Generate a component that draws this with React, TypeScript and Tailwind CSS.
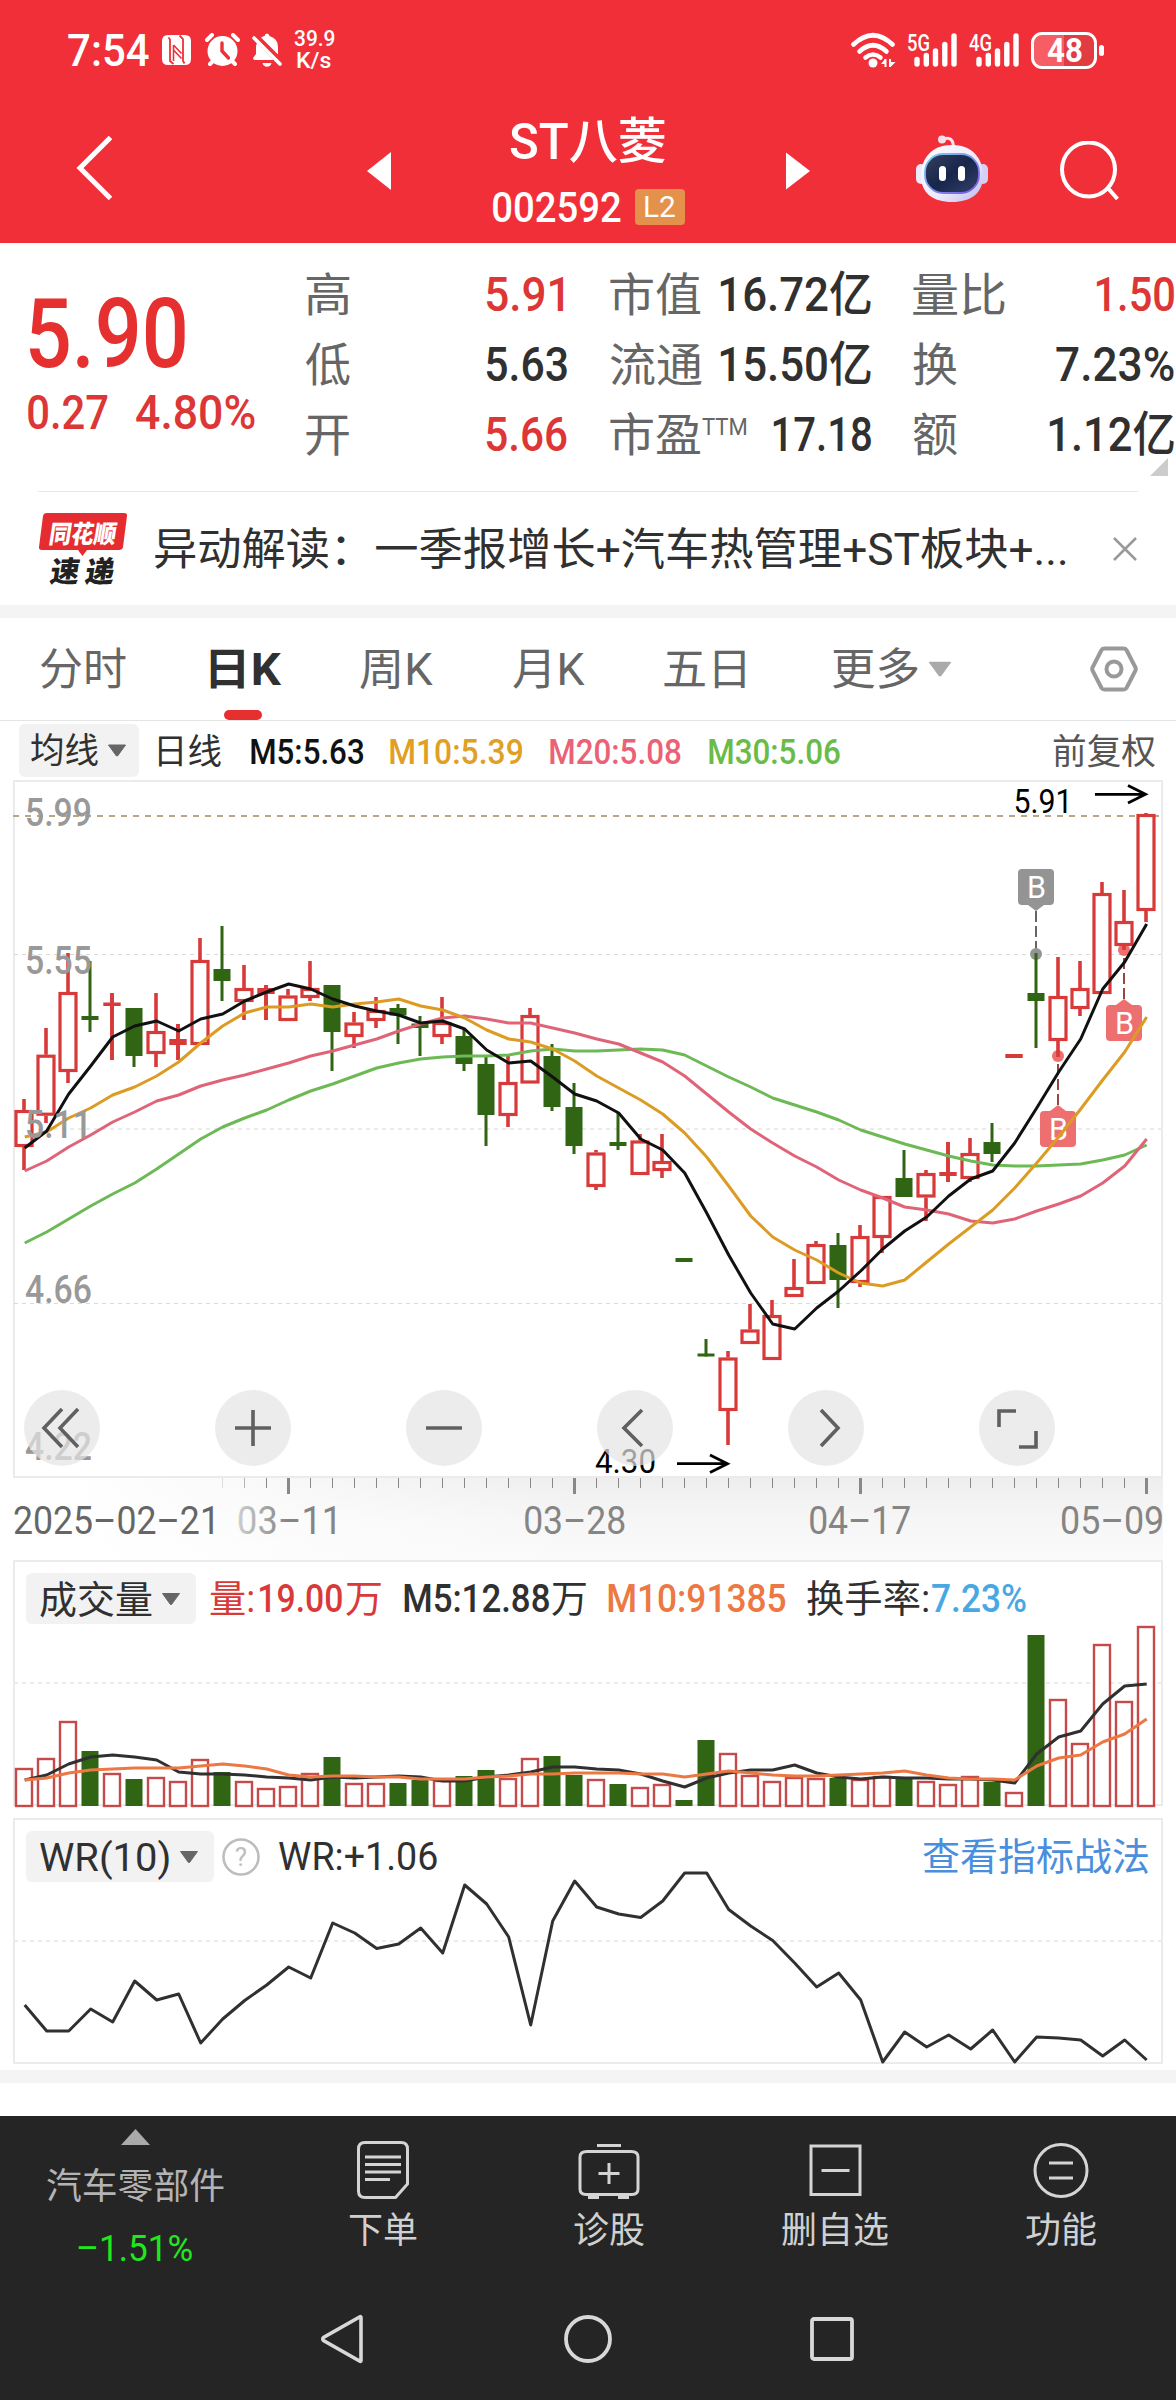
import { useLayoutEffect, useRef, type ReactNode } from "react";

/** Text squeezed or stretched horizontally so its ink fills exactly `w` pixels. */
function Fit({ w, className = "", children }: { w: number; className?: string; children: string }) {
  const ref = useRef<HTMLSpanElement>(null);
  useLayoutEffect(() => {
    const el = ref.current;
    if (!el) return;
    const cs = getComputedStyle(el);
    const ctx = document.createElement("canvas").getContext("2d");
    if (!ctx) return;
    ctx.font = `${cs.fontStyle} ${cs.fontWeight} ${cs.fontSize} ${cs.fontFamily}`;
    const m = ctx.measureText(children);
    const ink = m.actualBoundingBoxLeft + m.actualBoundingBoxRight;
    const s = w / ink;
    el.style.transform = `translateX(${m.actualBoundingBoxLeft * s}px) scaleX(${s})`;
  }, [w, children]);
  return (
    <span className={`block shrink-0 leading-none ${className}`} style={{ width: w }}>
      <span ref={ref} className="inline-block origin-left whitespace-nowrap align-top leading-none">
        {children}
      </span>
    </span>
  );
}

function Down({ className = "", fill = "#666" }: { className?: string; fill?: string }) {
  return (
    <svg viewBox="0 0 18 12" className={`shrink-0 ${className}`}>
      <path d="M0.5 0.5H17.5L9.6 11.4H8.4Z" fill={fill} stroke={fill} strokeLinejoin="round" />
    </svg>
  );
}

function Signal({ label }: { label: string }) {
  return (
    <svg viewBox="-2 -8 54 50" className="-m-x h-[50px] w-[54px] shrink-0">
      <text x="0" y="17.5" fontSize="23" fontWeight="500" fill="#fff" textLength="23" lengthAdjust="spacingAndGlyphs">{label}</text>
      <path d="M10 26.5V31M19.3 22.5V31M28.5 18V31M37.8 11.5V31M47 3V31" stroke="#fff" strokeWidth="5.4" strokeLinecap="round" />
    </svg>
  );
}

function StatusBar() {
  return (
    <div className="flex h-[100px] items-center pl-[68px] text-white">
      <Fit w={81} className="text-[45px] font-medium">7:54</Fit>
      <svg viewBox="0 0 31 32" className="ml-[12px] h-[32px] w-[31px] shrink-0">
        <path d="M7 1H24Q30 1 30 7V25Q30 31 24 31H7Q1 31 1 25V7Q1 1 7 1Z" fill="#fff" />
        <path d="M8.500 1V31M22.500 1V31" stroke="#f12f38" strokeWidth="0" />
        <path d="M7.500 3.500L9 5.500V27L12.500 30M18.500 1.500L22 5V27L23.500 29.500" fill="none" stroke="#f12f38" strokeWidth="1.800" />
        <path d="M12.500 11L20.500 19.500M12.500 16L20.500 24.500M12.500 11V27" fill="none" stroke="#f12f38" strokeWidth="1.600" />
      </svg>
      <svg viewBox="0 0 35 34" className="ml-[13px] h-[34px] w-[35px] shrink-0">
        <circle cx="17.5" cy="18" r="15" fill="#fff" />
        <path d="M2 7L7 2M33 7L28 2M5 31L8 28M30 31L27 28" stroke="#fff" strokeWidth="4" strokeLinecap="round" />
        <path d="M17 10V18L23.5 25" stroke="#f12f38" strokeWidth="3.4" fill="none" strokeLinecap="round" />
      </svg>
      <svg viewBox="0 0 30 34" className="ml-[12px] h-[34px] w-[30px] shrink-0">
        <path d="M9 4.5Q11 3 12.500 3Q13 0.500 15 0.500Q17 0.500 17.500 3Q26 5.500 26 14V21.500ZM5 10L21.500 27H3Q1 27 1 25L4 21V14Q4 12 5 10Z" fill="#fff" />
        <path d="M2 5L28 31" stroke="#fff" strokeWidth="3.600" strokeLinecap="round" />
        <path d="M10.500 30H19.500Q18.500 33.800 15 33.800Q11.500 33.800 10.500 30Z" fill="#fff" />
      </svg>
      <div className="ml-[11px] flex w-[42px] flex-col items-center text-[22px] font-medium">
        <Fit w={41}>39.9</Fit>
        <Fit w={34}>K/s</Fit>
      </div>
      <svg viewBox="0 0 46 36" className="ml-[516px] h-[36px] w-[46px] shrink-0">
        <g fill="none" stroke="#fff" strokeWidth="4.600" strokeLinecap="round">
          <path d="M2.500 12.500Q22 -6 41.500 12.500" />
          <path d="M8.500 19.500Q22 7 35.500 19.500" />
          <path d="M14.500 25.500Q22 19.500 29.500 25.500" />
        </g>
        <circle cx="22" cy="31" r="4.500" fill="#fff" />
        <path d="M34.500 27V35M39 27V35" stroke="#fff" strokeWidth="2" />
        <path d="M34 27L30 32H34ZM39.500 35L44.500 30H39.500Z" fill="#fff" />
      </svg>
      <div className="ml-[8px]"><Signal label="5G" /></div>
      <div className="ml-[8px]"><Signal label="4G" /></div>
      <div className="ml-[10px] flex h-[37px] w-[66px] items-center justify-center rounded-[11px] border-[3px] border-white bg-[linear-gradient(90deg,#f65d65_50%,#e03c42_50%)]">
        <Fit w={35} className="text-[33px] font-bold">48</Fit>
      </div>
      <div className="ml-[2px] h-[11px] w-[4.500px] rounded-sm bg-white" />
    </div>
  );
}

function Robot() {
  return (
    <svg viewBox="0 0 72 68" className="h-[68px] w-[72px] shrink-0">
      <defs>
        <linearGradient id="shell" x1="0" y1="0" x2="1" y2="1">
          <stop offset="0" stopColor="#ffffff" />
          <stop offset="0.600" stopColor="#ece9fc" />
          <stop offset="1" stopColor="#b9b8ee" />
        </linearGradient>
        <linearGradient id="rim" x1="0" y1="0" x2="1" y2="1">
          <stop offset="0" stopColor="#7fd0f5" />
          <stop offset="1" stopColor="#7a52e0" />
        </linearGradient>
        <linearGradient id="visor" x1="0" y1="0" x2="1" y2="1">
          <stop offset="0" stopColor="#34405e" />
          <stop offset="0.500" stopColor="#17264a" />
          <stop offset="1" stopColor="#35406a" />
        </linearGradient>
      </defs>
      <path d="M28 4Q37 1 37.500 12" fill="none" stroke="#f4e4f2" strokeWidth="3" />
      <circle cx="26" cy="4.500" r="4" fill="#f8dfe8" />
      <rect x="0" y="29" width="10" height="20" rx="5" fill="#eceafa" />
      <rect x="62" y="29" width="10" height="20" rx="5" fill="#d5d0f5" />
      <path d="M36 10C56 10 67 23 67 41C67 58 55 67 36 67C17 67 5 58 5 41C5 23 16 10 36 10Z" fill="url(#shell)" />
      <rect x="9" y="19" width="54" height="39" rx="18" fill="url(#visor)" stroke="url(#rim)" strokeWidth="1.800" />
      <rect x="23" y="31" width="7" height="15" rx="3.500" fill="#fff" />
      <rect x="42" y="31" width="7" height="15" rx="3.500" fill="#fff" />
    </svg>
  );
}

function TitleBar() {
  return (
    <div className="flex h-[143px] items-start text-white">
      <svg viewBox="0 0 37 66" className="ml-[76px] mt-[35px] h-[66px] w-[37px]">
        <path d="M34.500 2.500L4 33L34.500 63.500" fill="none" stroke="#fff" strokeWidth="5" />
      </svg>
      <svg viewBox="0 0 24 38" className="ml-[254px] mt-[52px] h-[38px] w-[24px]"><path d="M24 0V38L0 19Z" fill="#fff" /></svg>
      <div className="ml-[101px] mt-[17px] flex w-[193px] flex-col">
        <Fit w={155} className="ml-[18px] text-[50px] font-medium">ST八菱</Fit>
        <div className="mt-[22px] flex h-[36px] items-center">
          <Fit w={128} className="ml-px mt-[2px] text-[42px] font-medium">002592</Fit>
          <div className="ml-[14px] flex h-[36px] w-[50px] items-center justify-center rounded bg-[#e4914c]">
            <Fit w={30} className="text-[30px]">L2</Fit>
          </div>
        </div>
      </div>
      <svg viewBox="0 0 24 38" className="ml-[101px] mt-[52px] h-[38px] w-[24px]"><path d="M0 0.500V37.500L24 19Z" fill="#fff" /></svg>
      <div className="ml-[106px] mt-[35px]"><Robot /></div>
      <svg viewBox="0 0 60 60" className="ml-[72px] mt-[41px] h-[60px] w-[60px]">
        <ellipse cx="28.500" cy="28.500" rx="26.500" ry="27" fill="none" stroke="#fff" strokeWidth="4" />
        <path d="M47 46L57.500 58" stroke="#fff" strokeWidth="4" />
      </svg>
    </div>
  );
}

function Stat({ children }: { children: ReactNode }) {
  return <div className="flex h-[70px] items-center justify-between">{children}</div>;
}

const lab = "text-[46px] text-[#666]";
const num = "text-[48px] font-medium";
const red = "text-[#dc3636]";

function Quote() {
  return (
    <div className="relative flex h-[248px] pt-[17px] text-[#303030]">
      <div className="flex w-[306px] flex-col">
        <Fit w={156} className="ml-[29px] mt-[26px] text-[96px] font-medium text-[#e63030]">5.90</Fit>
        <div className={`mt-[7px] flex ${red}`}>
          <Fit w={80} className={`ml-[28px] ${num}`}>0.27</Fit>
          <Fit w={119} className={`ml-[28px] ${num}`}>4.80%</Fit>
        </div>
      </div>
      <div className="w-[261px]">
        <Stat><Fit w={44} className={lab}>高</Fit><Fit w={77} className={`${num} ${red} mr-[4px]`}>5.91</Fit></Stat>
        <Stat><Fit w={44} className={lab}>低</Fit><Fit w={81} className={num}>5.63</Fit></Stat>
        <Stat><Fit w={43} className={lab}>开</Fit><Fit w={81} className={`${num} ${red}`}>5.66</Fit></Stat>
      </div>
      <div className="ml-[43px] w-[261px]">
        <Stat><Fit w={91} className={lab}>市值</Fit><Fit w={151} className={num}>16.72亿</Fit></Stat>
        <Stat><Fit w={92} className={lab}>流通</Fit><Fit w={151} className={num}>15.50亿</Fit></Stat>
        <Stat>
          <div className="flex"><Fit w={90} className={lab}>市盈</Fit><Fit w={44} className="ml-[2px] mt-[3px] text-[24px] text-[#666]">TTM</Fit></div>
          <Fit w={98} className={num}>17.18</Fit>
        </Stat>
      </div>
      <div className="ml-[42px] w-[261px]">
        <Stat><Fit w={92} className={lab}>量比</Fit><Fit w={78} className={`${num} ${red}`}>1.50</Fit></Stat>
        <Stat><Fit w={44} className={lab}>换</Fit><Fit w={118} className={num}>7.23%</Fit></Stat>
        <Stat><Fit w={44} className={lab}>额</Fit><Fit w={125} className={num}>1.12亿</Fit></Stat>
      </div>
      <svg viewBox="0 0 18 18" className="absolute bottom-[15px] right-[8px] h-[18px] w-[18px]"><path d="M18 0V18H0Z" fill="#ccc" /></svg>
    </div>
  );
}

function News() {
  return (
    <div className="flex h-[114px] items-center">
      <div className="mx-[38px] h-full w-[1100px] border-t border-[#e8e8e8]">
        <div className="flex h-full items-center">
          <svg viewBox="39 503 90 90" className="ml-px h-[90px] w-[90px] shrink-0 overflow-visible">
            <path d="M47 512H124Q127.500 512 127 515L123 546Q122.500 549 119 549H87L82.500 555L78 549H42Q38.500 549 39 546L43 515Q43.500 512 47 512Z" fill="#e52d31" />
            <g transform="translate(48 541.500) skewX(-9)">
              <text x="0" y="0" fontSize="25" fontWeight="900" fill="#fff" textLength="67" lengthAdjust="spacingAndGlyphs">同花顺</text>
            </g>
            <g transform="translate(49 581) skewX(-9)" fill="#222" fontSize="29" fontWeight="900">
              <text x="0" y="0">速</text>
              <text x="35" y="0">递</text>
            </g>
          </svg>
          <Fit w={911} className="ml-[26px] mt-[2px] text-[44px] text-[#303030]">异动解读：一季报增长+汽车热管理+ST板块+...</Fit>
          <svg viewBox="0 0 24 24" className="ml-[47px] h-[24px] w-[24px] shrink-0"><path d="M1 1L23 23M23 1L1 23" stroke="#999" strokeWidth="2.500" /></svg>
        </div>
      </div>
    </div>
  );
}

function Tabs() {
  const t = "mt-[2px] text-[44px] text-[#666]";
  return (
    <div className="relative flex h-[103px] items-center border-b border-[#e4e4e4] pl-[40px]">
      <Fit w={86} className={t}>分时</Fit>
      <Fit w={72} className="ml-[84px] mt-[2px] text-[44px] font-bold text-[#303030]">日K</Fit>
      <Fit w={73} className={`ml-[78px] ${t}`}>周K</Fit>
      <Fit w={72} className={`ml-[80px] ${t}`}>月K</Fit>
      <Fit w={81} className={`ml-[79px] ${t}`}>五日</Fit>
      <Fit w={85} className={`ml-[88px] ${t}`}>更多</Fit>
      <Down className="ml-[11px] h-[18px] w-[22px]" fill="#aaa" />
      <svg viewBox="0 0 48 46" className="ml-[139px] h-[46px] w-[48px] shrink-0" fill="none" stroke="#999" strokeWidth="4">
        <path d="M14.500 2.500H33.500Q35.500 2.500 36.500 4L45.500 21.500Q46 23 45.500 24.500L36.500 42Q35.500 43.500 33.500 43.500H14.500Q12.500 43.500 11.500 42L2.500 24.500Q2 23 2.500 21.500L11.500 4Q12.500 2.500 14.500 2.500Z" />
        <circle cx="24" cy="23" r="7.500" />
      </svg>
      <div className="absolute bottom-0 left-[224px] h-[10px] w-[38px] rounded-full bg-[#e63030]" />
    </div>
  );
}

function Legend() {
  const n = "mt-[4px] text-[35px] font-medium";
  return (
    <div className="flex h-[59px] items-center pl-[19px]">
      <div className="flex h-[53px] w-[120px] items-center rounded-md bg-[#f2f2f2]">
        <Fit w={67} className="ml-[12px] mt-[2px] text-[35px] text-[#303030]">均线</Fit>
        <Down className="ml-[10px] h-[13px] w-[18px]" />
      </div>
      <Fit w={62} className="ml-[20px] mt-[3px] text-[35px] text-[#303030]">日线</Fit>
      <Fit w={112} className={`ml-[30px] text-[#111] ${n}`}>M5:5.63</Fit>
      <Fit w={132} className={`ml-[27px] text-[#dfa023] ${n}`}>M10:5.39</Fit>
      <Fit w={131} className={`ml-[28px] text-[#ea6276] ${n}`}>M20:5.08</Fit>
      <Fit w={131} className={`ml-[28px] text-[#6abb48] ${n}`}>M30:5.06</Fit>
      <Fit w={102} className="ml-[213px] mt-[3px] text-[35px] text-[#555]">前复权</Fit>
    </div>
  );
}

// One row per trading day: direction (1 up, 0 down), high, body top, body bottom, low, volume top.
const days: number[][] = [
  [1, 1099, 1110, 1147, 1170, 1768], [1, 1028, 1054.7, 1115.7, 1123, 1758], [1, 953, 992, 1072, 1083, 1721],
  [0, 961, 1016, 1020, 1032, 1751], [1, 993, 1002.5, 1006, 1060, 1773], [0, 1008, 1008, 1056, 1067, 1779],
  [1, 993, 1031, 1054, 1067, 1777], [1, 1024, 1039, 1045, 1060, 1781], [1, 938, 960, 1045, 1045, 1759],
  [0, 926, 969, 981, 1001, 1772], [1, 965, 988, 1002, 1020, 1781], [1, 985, 988, 994, 1020, 1788],
  [1, 989, 995.5, 1021, 1021, 1786], [1, 961, 988, 998, 1001, 1773], [0, 985, 985, 1032, 1071, 1757],
  [1, 1012, 1022.5, 1037, 1048, 1783], [1, 997, 1010, 1021, 1028, 1783], [0, 1004, 1008, 1015.5, 1044, 1783],
  [0, 1016, 1023.5, 1028, 1056, 1780], [1, 997, 1022, 1037, 1044, 1780], [0, 1028, 1036, 1064, 1071, 1776],
  [0, 1057, 1064, 1115, 1146, 1770], [1, 1056, 1082, 1116, 1127, 1778], [1, 1008, 1015, 1083.5, 1083.5, 1758],
  [0, 1044, 1056, 1107, 1111, 1756], [0, 1083, 1107, 1146, 1154, 1775], [1, 1150, 1152.5, 1187, 1190, 1779],
  [0, 1113, 1142, 1146, 1150, 1784], [1, 1134, 1140.5, 1175, 1175, 1787], [1, 1134, 1161, 1171, 1178, 1784],
  [0, 1258, 1258, 1262, 1262, 1800], [0, 1339, 1353.5, 1356.5, 1356.5, 1740], [1, 1351, 1357.5, 1411, 1445, 1753],
  [1, 1304, 1329.5, 1344, 1344, 1775], [1, 1300, 1315, 1360, 1360, 1781], [1, 1259, 1287, 1297, 1297, 1777],
  [1, 1241, 1244, 1284, 1284, 1778], [0, 1233, 1245, 1280, 1308, 1778], [1, 1225, 1236, 1283, 1287, 1779],
  [1, 1196, 1196, 1238, 1253, 1776], [0, 1150, 1178, 1197, 1197, 1779], [1, 1170, 1173, 1197.5, 1221, 1781],
  [1, 1142, 1172, 1176, 1182, 1784], [1, 1138, 1153, 1179, 1182, 1776], [0, 1123, 1142, 1154, 1162, 1782],
  [1, 1054, 1054, 1058, 1058, 1792], [0, 953, 993, 1001, 1048, 1635], [1, 957, 996, 1041, 1057, 1699],
  [1, 961, 988, 1009, 1016, 1743], [1, 882, 893, 994, 994, 1644], [1, 890, 921, 946, 950, 1701],
  [1, 813, 814, 911, 922, 1626],
];
const m5 = [1148, 1131, 1094, 1066, 1037, 1026, 1021, 1031, 1019, 1014, 1001, 992, 984, 989, 999, 1006, 1011, 1015, 1023, 1021, 1029, 1050, 1063, 1061, 1077, 1094, 1101, 1113, 1139, 1150, 1173, 1213, 1255, 1293, 1324, 1329, 1308, 1291, 1271, 1249, 1231, 1217, 1196, 1179, 1171, 1143, 1108, 1072, 1039, 989, 962, 924];
const m10 = [1137, 1132, 1118, 1108, 1095, 1087, 1076, 1062, 1043, 1026, 1013, 1007, 1007, 1004, 1007, 1004, 1002, 999, 1006, 1010, 1018, 1030, 1039, 1042, 1049, 1061, 1076, 1088, 1100, 1114, 1133, 1157, 1186, 1216, 1237, 1250, 1260, 1273, 1283, 1286, 1280, 1262, 1244, 1227, 1210, 1188, 1163, 1137, 1109, 1080, 1052, 1017];
const m20 = [1171, 1161, 1147, 1135, 1122, 1112, 1101, 1095, 1086, 1080, 1075, 1069, 1063, 1056, 1051, 1045, 1039, 1031, 1024, 1018, 1016, 1019, 1023, 1023, 1028, 1033, 1039, 1044, 1053, 1062, 1076, 1094, 1112, 1129, 1143, 1156, 1167, 1180, 1190, 1198, 1207, 1210, 1214, 1221, 1223, 1219, 1211, 1204, 1196, 1183, 1166, 1139];
const m30 = [1243, 1232, 1219, 1206, 1194, 1183, 1169, 1154, 1139, 1127, 1118, 1110, 1100, 1091, 1084, 1076, 1068, 1063, 1059, 1057, 1056, 1056, 1055, 1051, 1049, 1051, 1051, 1050, 1049, 1050, 1055, 1066, 1077, 1087, 1098, 1105, 1112, 1120, 1130, 1137, 1144, 1150, 1156, 1161, 1165, 1166, 1166, 1165, 1164, 1160, 1155, 1145];
const v5 = [1780, 1775, 1764, 1757, 1755, 1757, 1760, 1772, 1774, 1774, 1775, 1777, 1778, 1780, 1777, 1778, 1777, 1776, 1777, 1781, 1781, 1777, 1775, 1772, 1767, 1767, 1769, 1770, 1774, 1781, 1787, 1778, 1773, 1770, 1770, 1765, 1773, 1777, 1779, 1777, 1778, 1778, 1779, 1779, 1780, 1783, 1754, 1737, 1731, 1704, 1686, 1684];
const v10 = [1780, 1778, 1773, 1770, 1769, 1768, 1768, 1768, 1766, 1764, 1766, 1769, 1775, 1777, 1776, 1776, 1777, 1777, 1779, 1779, 1779, 1777, 1776, 1774, 1774, 1773, 1773, 1773, 1774, 1774, 1777, 1774, 1771, 1773, 1775, 1776, 1776, 1775, 1774, 1773, 1771, 1775, 1778, 1779, 1779, 1780, 1766, 1758, 1755, 1742, 1734, 1719];
const wr = [2005, 2031, 2031, 2009, 2022, 1981, 2000, 1994, 2043, 2019, 2000.5, 1985, 1967, 1978, 1923, 1933, 1948.5, 1944, 1928, 1953, 1885, 1904, 1937, 2025, 1921, 1881, 1907, 1914, 1917.5, 1901, 1873, 1873, 1909.5, 1926, 1940.5, 1963, 1987, 1973, 2000, 2062, 2032, 2047, 2035, 2049, 2030, 2062, 2037, 2038, 2040, 2056, 2040, 2060];

const RED = "#d83a3a";
const GREEN = "#2f6513";
const at = (i: number) => 24 + 22 * i;

function Line({ ys, color, width = 3 }: { ys: number[]; color: string; width?: number }) {
  return <polyline points={ys.map((y, i) => `${at(i) + 0.7},${y}`).join(" ")} fill="none" stroke={color} strokeWidth={width} strokeLinejoin="round" />;
}

function Marker({ x, y, up, color, dot, dash }: { x: number; y: number; up: boolean; color: string; dot: number; dash: string }) {
  const edge = up ? y : y + 36;
  const tip = up ? y - 6 : y + 42;
  return (
    <g>
      <path d={`M${x} ${tip}V${dot}`} stroke={dash} strokeWidth="2" strokeDasharray="11 4" />
      <circle cx={x} cy={dot} r="6" fill={color} />
      <path d={`M${x - 8} ${edge}L${x} ${tip}L${x + 8} ${edge}Z`} fill={color} />
      <rect x={x - 18} y={y} width="36" height="36" rx="4" fill={color} />
      <text x={x - 9} y={y + 29} fontSize="31" fill="#fff" textLength="19" lengthAdjust="spacingAndGlyphs">B</text>
    </g>
  );
}

function Candles() {
  return (
    <g>
      {days.map(([up, hi, top, bot, lo], i) => {
        const x = at(i);
        if (!up)
          return (
            <g key={i} fill={GREEN}>
              <rect x={x - 1.5} y={hi} width="3" height={lo - hi} />
              <rect x={x - 8.5} y={top} width="17" height={bot - top} />
            </g>
          );
        const solid = bot - top < 7;
        return (
          <g key={i}>
            <path d={`M${x} ${hi}V${top}M${x} ${bot}V${lo}`} stroke={RED} strokeWidth="3.600" />
            {solid ? (
              <>
                <rect x={x - 8.7} y={top} width="17.4" height={bot - top} fill={RED} />
                {hi < top && <rect x={x - 1.8} y={hi} width="3.600" height={lo - hi} fill={RED} />}
              </>
            ) : (
              <rect x={x - 8} y={top + 1.5} width="16" height={bot - top - 3} fill="#fff" stroke={RED} strokeWidth="3.200" />
            )}
          </g>
        );
      })}
    </g>
  );
}

const priceLabels: [string, number][] = [["5.99", 826], ["5.55", 973.5], ["5.11", 1138], ["4.66", 1303], ["4.22", 1460]];

function PriceChart() {
  return (
    <svg viewBox="0 780 1176 698" className="block h-[698px] w-[1176px]">
      <rect x="14" y="781" width="1148" height="696" fill="#fff" stroke="#ebebeb" strokeWidth="2" />
      <path d="M13 816H1160" stroke="#b8a782" strokeWidth="2" strokeDasharray="6 6" />
      <path d="M14 954.500H1161M14 1303.500H1161" stroke="#d9d9d9" strokeDasharray="4 4" />
      <path d="M14 1129H1161" stroke="#ebebeb" strokeWidth="2" strokeDasharray="4 4" />
      <Marker x={1036} y={869} up={false} color="#949494" dot={954} dash="#666" />
      <Marker x={1058} y={1111} up color="#ee6f70" dot={1056} dash="#994444" />
      <Marker x={1124} y={1005} up color="#ee6f70" dot={950} dash="#994444" />
      <Candles />
      <Line ys={m30} color="#6cb955" />
      <Line ys={m20} color="#e06478" />
      <Line ys={m10} color="#dc9c24" />
      <Line ys={m5} color="#111" />
      {priceLabels.map(([t, y]) => (
        <text key={t} x="25" y={y} fontSize="38" fontWeight="500" fill="#999" textLength="67" lengthAdjust="spacingAndGlyphs">{t}</text>
      ))}
      <text x="1013.500" y="813" fontSize="33" fill="#000" textLength="59" lengthAdjust="spacingAndGlyphs">5.91</text>
      <text x="595" y="1473" fontSize="33" fill="#000" textLength="61" lengthAdjust="spacingAndGlyphs">4.30</text>
      <g fill="none" stroke="#000" strokeWidth="2.800">
        <path d="M1095 794.300H1145M1128 785.500L1145.500 794.300L1128 803" />
        <path d="M677 1463.700H727M710 1455L727.500 1463.700L710 1472.500" />
      </g>
    </svg>
  );
}

const controls = [
  "M38 19L20 38L38 57M54 19L36 38L54 57",
  "M38 20V56M20 38H56",
  "M20 38H56",
  "M45 20L27 38L45 56",
  "M33 20L50 38L33 56",
  "M20 37V21H37M57 41V57H40",
];

function Controls() {
  return (
    <div className="absolute bottom-[12px] left-[24px] flex gap-[115px]">
      {controls.map((d) => (
        <svg key={d} viewBox="0 0 76 76" className="h-[76px] w-[76px]">
          <circle cx="38" cy="38" r="38" fill="#e4e4e4" fillOpacity="0.700" />
          <path d={d} fill="none" stroke="#606060" strokeWidth="3.600" />
        </svg>
      ))}
    </div>
  );
}

function Axis() {
  const d = "text-[38px] text-[#858585]";
  return (
    <div className="relative ml-[13px] h-[82px] w-[1150px] bg-gradient-to-b from-[#eeeeee] via-[#f6f6f6] to-[#fafafa]">
      <div className="absolute inset-0 bg-gradient-to-r from-white from-5% to-transparent to-50%" />
      <svg viewBox="13 0 1150 16" className="absolute left-0 top-0 h-[16px] w-[1150px]">
        {days.map((_, i) => {
          const major = i % 13 === 12;
          if (i < 9) return null;
          return <rect key={i} x={at(i) + (major ? -1 : 0)} y="0" width={major ? 3 : 1} height={major ? 16 : 10} fill="#888" opacity={i === 9 ? 0.25 : i === 10 ? 0.6 : 1} />;
        })}
      </svg>
      <div className="relative flex h-full items-center pl-px pt-[2px]">
        <Fit w={199} className="mt-[2px] text-[38px] text-[#666]">2025–02–21</Fit>
        <div className="relative ml-[26px] mt-[2px]">
          <Fit w={96} className={d}>03–11</Fit>
          <div className="absolute inset-0 bg-gradient-to-r from-[#fafafa]/60 to-transparent to-50%" />
        </div>
        <Fit w={100} className={`ml-[190px] mt-[2px] ${d}`}>03–28</Fit>
        <Fit w={100} className={`ml-[185px] mt-[2px] ${d}`}>04–17</Fit>
        <Fit w={100} className={`ml-[152px] mt-[2px] ${d}`}>05–09</Fit>
      </div>
    </div>
  );
}

function Volume() {
  const n = "mt-px text-[38px]";
  return (
    <div className="relative h-[258px]">
      <svg viewBox="0 1560 1176 258" className="block h-[258px] w-[1176px]">
        <rect x="14" y="1561" width="1148" height="244" fill="#fff" stroke="#ebebeb" strokeWidth="2" />
        <path d="M14 1683H1161" stroke="#ebebeb" strokeWidth="2" strokeDasharray="4 4" />
        {days.map((d, i) =>
          d[0] ? (
            <rect key={i} x={at(i) - 8} y={d[5] + 1} width="16" height={1805 - d[5]} fill="#fff" stroke="#c64a4a" strokeWidth="2.400" />
          ) : (
            <rect key={i} x={at(i) - 8.5} y={d[5]} width="17" height={1806 - d[5]} fill={GREEN} />
          ),
        )}
        <Line ys={v5} color="#303030" />
        <Line ys={v10} color="#ec7843" />
      </svg>
      <div className="absolute left-[26px] top-[13px] flex h-[51px] items-center">
        <div className="flex h-full w-[170px] items-center rounded-md bg-[#f2f2f2]">
          <Fit w={112} className="ml-[14px] mt-[2px] text-[38px] text-[#303030]">成交量</Fit>
          <Down className="ml-[10px] h-[12px] w-[18px]" />
        </div>
        <div className="ml-[14px] flex text-[#d83a3a]">
          <Fit w={43} className={n}>量:</Fit>
          <Fit w={82} className={`ml-[7px] font-medium ${n}`}>19.00</Fit>
          <Fit w={35} className={`ml-[4px] ${n}`}>万</Fit>
        </div>
        <div className="ml-[23px] flex text-[#303030]">
          <Fit w={145} className={`font-medium ${n}`}>M5:12.88</Fit>
          <Fit w={34} className={`ml-[3px] ${n}`}>万</Fit>
        </div>
        <Fit w={178} className={`ml-[22px] font-medium text-[#ec7843] ${n}`}>M10:91385</Fit>
        <Fit w={121} className={`ml-[21px] text-[#303030] ${n}`}>换手率:</Fit>
        <Fit w={94} className={`ml-[4px] font-medium text-[#48a8e4] ${n}`}>7.23%</Fit>
      </div>
    </div>
  );
}

function WilliamsR() {
  return (
    <div className="relative h-[252px]">
      <svg viewBox="0 1818 1176 252" className="block h-[252px] w-[1176px]">
        <rect x="14" y="1819" width="1148" height="244" fill="#fff" stroke="#ebebeb" strokeWidth="2" />
        <path d="M14 1941H1161" stroke="#ebebeb" strokeWidth="2" strokeDasharray="4 4" />
        <Line ys={wr} color="#303030" />
      </svg>
      <div className="absolute left-[26px] top-[13px] flex h-[51px] items-center text-[38px] text-[#303030]">
        <div className="flex h-full w-[188px] items-center rounded-md bg-[#f2f2f2]">
          <Fit w={129} className="ml-[14px] pt-[2px]">WR(10)</Fit>
          <Down className="ml-[11px] h-[12px] w-[18px]" />
        </div>
        <svg viewBox="0 0 38 38" className="ml-[8px] h-[38px] w-[38px]">
          <circle cx="19" cy="19" r="17.500" fill="none" stroke="#bdbdbd" strokeWidth="2.600" />
          <text x="19" y="28" fontSize="26" fill="#bdbdbd" textAnchor="middle">?</text>
        </svg>
        <Fit w={158} className="ml-[19px]">WR:+1.06</Fit>
        <Fit w={225} className="ml-[486px] mt-px text-[#4a8fdd]">查看指标战法</Fit>
      </div>
    </div>
  );
}

function Action({ w, label, children }: { w: number; label: string; children: ReactNode }) {
  return (
    <div className="flex w-[226px] flex-col items-center pt-[24px]">
      <svg viewBox="0 0 64 60" className="h-[60px] w-[64px]" fill="none" stroke="#d4d4d4" strokeWidth="3">{children}</svg>
      <Fit w={w} className="mt-[13px] text-[36px] text-[#d0d0d0]">{label}</Fit>
    </div>
  );
}

function BottomBar() {
  return (
    <div className="h-[284px] bg-[#252525]">
      <div className="flex h-[174px]">
        <div className="flex w-[270px] flex-col items-center">
          <svg viewBox="0 0 29 16" className="mt-[13px] h-[16px] w-[29px]"><path d="M14.500 0L29 16H0Z" fill="#aaa" /></svg>
          <Fit w={177} className="mt-[24px] text-[36px] text-[#b4b4b4]">汽车零部件</Fit>
          <Fit w={114} className="mt-[26px] text-[36px] text-[#1fe81f]">–1.51%</Fit>
        </div>
        <Action w={68} label="下单">
          <path d="M14 2.500H50Q56.500 2.500 56.500 9V44L44.500 57.500H14Q7.500 57.500 7.500 51V9Q7.500 2.500 14 2.500ZM14 17H50M14 24.500H50M14 32H50M14 39.500H39" />
        </Action>
        <Action w={70} label="诊股">
          <path d="M20 5.500H44M10 11.500H54Q61 11.500 61 17V49Q61 54.500 55 54.500H9Q3 54.500 3 49V17Q3 11.500 10 11.500ZM32 23V44M21.500 33.500H42.500M11 57.500H22M41 57.500H52" />
        </Action>
        <Action w={106} label="删自选">
          <path d="M8 6H57V54.500H8ZM18.500 30.500H46.500" />
        </Action>
        <Action w={70} label="功能">
          <circle cx="32" cy="30.500" r="26" />
          <path d="M20 23H44M20 38H44" />
        </Action>
      </div>
      <div className="flex h-[98px] items-center pl-[320px]">
        <svg viewBox="0 0 44 50" className="h-[50px] w-[44px]"><path d="M41 3.500V46.500Q41 48 39.500 47L3.500 26.500Q2 25 3.500 23.500L39.500 3Q41 2 41 3.500Z" fill="none" stroke="#d8d8d8" strokeWidth="3.600" /></svg>
        <svg viewBox="0 0 50 50" className="ml-[199px] h-[50px] w-[50px]"><circle cx="25" cy="25" r="22" fill="none" stroke="#d8d8d8" strokeWidth="3.800" /></svg>
        <svg viewBox="0 0 46 46" className="ml-[196px] h-[46px] w-[46px]"><rect x="3" y="3" width="40" height="40" rx="2" fill="none" stroke="#d8d8d8" strokeWidth="3.800" /></svg>
      </div>
    </div>
  );
}

export default function App() {
  return (
    <div className="h-[2400px] w-[1176px] overflow-hidden bg-white font-[Roboto,'Noto_Sans_CJK_SC',sans-serif]">
      <div className="h-[243px] bg-[#f12f38]">
        <StatusBar />
        <TitleBar />
      </div>
      <Quote />
      <News />
      <div className="h-[13px] bg-[#f4f4f4]" />
      <Tabs />
      <Legend />
      <div className="relative">
        <PriceChart />
        <Controls />
      </div>
      <Axis />
      <Volume />
      <WilliamsR />
      <div className="mb-[33px] h-[13px] bg-[#f4f4f4]" />
      <BottomBar />
    </div>
  );
}
